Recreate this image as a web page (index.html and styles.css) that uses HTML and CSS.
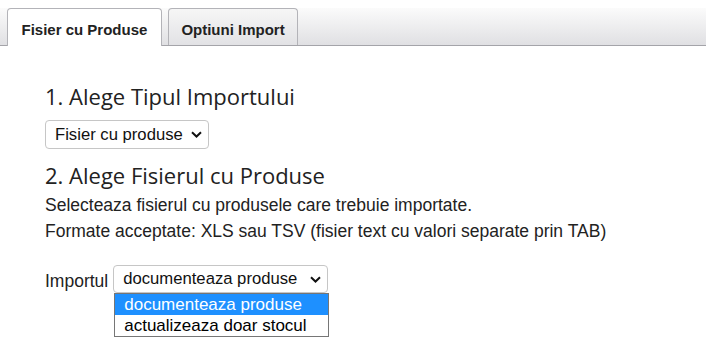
FILE: index.html
```html
<!DOCTYPE html>
<html lang="ro">
<head>
<meta charset="utf-8">
<title>Import produse</title>
<link rel="stylesheet" href="styles.css">
</head>
<body>
<div class="tabs">
  <div class="tab tab-active">Fisier cu Produse</div>
  <div class="tab">Optiuni Import</div>
</div>
<div class="content">
  <h2 class="step">1. Alege Tipul Importului</h2>
  <div class="select select-type">
    <span class="select-text">Fisier cu produse</span>
    <svg class="chev" width="11" height="7" viewBox="0 0 11 7"><path d="M1 1.2 L5.5 5.5 L10 1.2" fill="none" stroke="#111" stroke-width="2"/></svg>
  </div>
  <h2 class="step step-two">2. Alege Fisierul cu Produse</h2>
  <p class="info">Selecteaza fisierul cu produsele care trebuie importate.<br>Formate acceptate: XLS sau TSV (fisier text cu valori separate prin TAB)</p>
  <div class="row">
    <span class="label">Importul</span>
    <div class="select-wrap">
      <div class="select select-mode">
        <span class="select-text">documenteaza produse</span>
        <svg class="chev" width="11" height="7" viewBox="0 0 11 7"><path d="M1 1.2 L5.5 5.5 L10 1.2" fill="none" stroke="#111" stroke-width="2"/></svg>
      </div>
      <div class="option-list">
        <div class="opt opt-sel">documenteaza produse</div>
        <div class="opt">actualizeaza doar stocul</div>
      </div>
    </div>
  </div>
</div>
</body>
</html>
```

FILE: styles.css
```css
html, body {
  margin: 0;
  padding: 0;
  background: #fff;
}
body {
  font-family: "Liberation Sans", Arial, sans-serif;
  color: #222;
  min-height: 361px;
}
.tabs {
  margin-top: 8px;
  height: 37px;
  border-bottom: 1px solid #a4a4a9;
  background: linear-gradient(#fbfbfb, #e0e0e3);
  display: flex;
  align-items: flex-start;
  gap: 6px;
  padding-left: 7px;
}
.tab {
  box-sizing: border-box;
  height: 37px;
  padding: 5px 12.5px 0;
  line-height: 32px;
  font-size: 15px;
  font-weight: bold;
  color: #222;
  border: 1px solid #b3b3b8;
  border-bottom: none;
  border-radius: 4px 4px 0 0;
  background: linear-gradient(#f6f6f6, #e2e2e5);
}
.tab-active {
  height: 38px;
  padding: 5px 13.5px 0;
  background: #fff;
  position: relative;
  z-index: 1;
}
.content {
  padding-left: 45px;
  padding-top: 35px;
}
.step {
  margin: 0;
  font-family: "Open Sans", sans-serif;
  font-weight: normal;
  font-size: 22px;
  line-height: 30px;
  color: #222;
}
.select {
  box-sizing: border-box;
  display: flex;
  align-items: center;
  justify-content: space-between;
  border: 1px solid #c6c6c6;
  border-radius: 4px;
  background: #fff;
  font-size: 16.67px;
  color: #111;
  padding: 0 6px 0 9px;
}
.select-type {
  margin-top: 9px;
  width: 164px;
  height: 29px;
}
.step-two {
  margin-top: 11px;
}
.info {
  margin: 2px 0 0;
  font-size: 17.5px;
  line-height: 26px;
  color: #222;
}
.row {
  margin-top: 21px;
  display: flex;
  align-items: flex-start;
  gap: 5px;
}
.label {
  font-size: 17.5px;
  line-height: 20px;
  padding-top: 6px;
  color: #222;
}
.select-mode {
  width: 215px;
  height: 28px;
}
.option-list {
  margin-left: 1px;
  width: 215px;
  box-sizing: border-box;
  border: 1px solid #767676;
  background: #fff;
}
.opt {
  height: 21px;
  line-height: 21px;
  padding-left: 9px;
  font-size: 17px;
  color: #000;
  white-space: nowrap;
}
.opt-sel {
  background: #1e90ff;
  color: #fff;
}
```
